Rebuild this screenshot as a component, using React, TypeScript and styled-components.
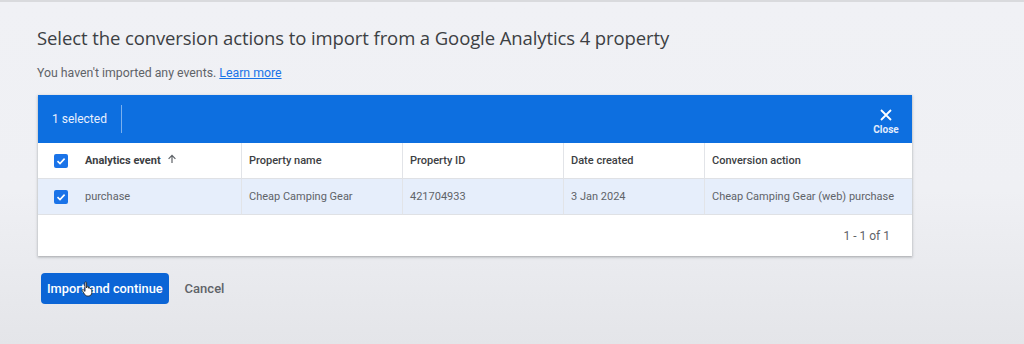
import React from 'react';
import styled, { createGlobalStyle } from 'styled-components';

const GlobalStyle = createGlobalStyle`
  html, body {
    margin: 0;
    padding: 0;
  }
  body {
    background: #eff0f4;
    font-family: Roboto, "Liberation Sans", Arial, sans-serif;
  }
`;

const Page = styled.div`
  width: 1024px;
  height: 344px;
  box-sizing: border-box;
  border-top: 2px solid #d9dadd;
  background: linear-gradient(180deg, #f0f1f5 0%, #eff0f4 55%, #e4e5e9 100%);
  padding: 22px 0 0 37px;
  overflow: hidden;
`;

const Title = styled.h1`
  margin: 0;
  font-family: "Open Sans", Roboto, sans-serif;
  font-size: 18.5px;
  font-weight: 400;
  line-height: 28px;
  color: #3c4043;
  letter-spacing: -0.1px;
`;

const Subtitle = styled.p`
  margin: 13px 0 0;
  font-size: 12.3px;
  line-height: 16px;
  color: #5f6368;
`;

const Link = styled.a`
  color: #1a73e8;
  text-decoration: underline;
`;

const Card = styled.div`
  margin: 14px 0 0 1px;
  width: 874px;
  background: #fff;
  box-shadow: 0 1px 2px rgba(60, 64, 67, 0.3), 0 1px 3px 1px rgba(60, 64, 67, 0.1);
`;

const SelectionBar = styled.div`
  height: 48px;
  background: #0d6fe0;
  display: flex;
  align-items: center;
  padding-left: 14px;
  color: #fff;
`;

const SelectedCount = styled.span`
  font-size: 12px;
  color: #e8f0fe;
  padding-right: 14px;
`;

const BarDivider = styled.span`
  width: 1px;
  height: 28px;
  background: rgba(255, 255, 255, 0.45);
`;

const CloseButton = styled.button`
  margin-left: auto;
  width: 52px;
  background: none;
  border: none;
  display: flex;
  flex-direction: column;
  align-items: center;
  padding: 4px 0 0;
  font-family: Roboto, sans-serif;
  font-size: 10px;
  font-weight: 700;
  color: #e3ecfb;
  gap: 2px;
`;

const Grid = styled.div`
  display: grid;
  grid-template-columns: 203px 161px 161px 141px 1fr;
`;

const Cell = styled.div<{ $head?: boolean; $selected?: boolean; $first?: boolean }>`
  height: 35px;
  display: flex;
  align-items: center;
  gap: 17px;
  padding-left: ${({ $first }) => ($first ? '16px' : '7px')};
  font-size: 11px;
  color: ${({ $head }) => ($head ? '#3c4043' : '#5f6368')};
  font-weight: ${({ $head, $first }) => ($head && $first ? 700 : $head ? 500 : 400)};
  background: ${({ $selected }) => ($selected ? '#e6eefb' : '#fff')};
  border-left: ${({ $first }) => ($first ? 'none' : '1px solid #e2e4e8')};
  border-bottom: 1px solid #dfe1e5;
  white-space: nowrap;
`;

const Checkbox = styled.span`
  width: 14px;
  height: 14px;
  border-radius: 2px;
  background: #1a73e8;
  display: inline-flex;
  align-items: center;
  justify-content: center;
  flex-shrink: 0;
`;

const SortArrow = styled.span`
  display: inline-flex;
  margin-left: 6px;
`;

const Footer = styled.div`
  height: 41px;
  display: flex;
  align-items: center;
  justify-content: flex-end;
  padding-right: 22px;
  font-size: 12px;
  color: #5f6368;
`;

const Actions = styled.div`
  display: flex;
  align-items: center;
  gap: 16px;
  margin: 17px 0 0 4px;
`;

const PrimaryButton = styled.button`
  height: 31px;
  padding: 0 6px;
  border: none;
  border-radius: 4px;
  background: #0b65d6;
  color: #fff;
  font-family: Roboto, sans-serif;
  font-size: 12.8px;
  font-weight: 500;
  position: relative;
`;

const TextButton = styled.button`
  background: none;
  border: none;
  color: #5f6368;
  font-family: Roboto, sans-serif;
  font-size: 13px;
  font-weight: 500;
  padding: 0;
`;

const Cursor = styled.svg`
  position: absolute;
  left: 40px;
  top: 8px;
`;

const CheckIcon = () => (
  <svg width="10" height="10" viewBox="0 0 10 10">
    <path d="M1.5 5.2 L4 7.6 L8.6 2.6" stroke="#fff" strokeWidth="1.6" fill="none" />
  </svg>
);

const columns = ['Analytics event', 'Property name', 'Property ID', 'Date created', 'Conversion action'];
const row = ['purchase', 'Cheap Camping Gear', '421704933', '3 Jan 2024', 'Cheap Camping Gear (web) purchase'];

export default function App() {
  return (
    <>
      <GlobalStyle />
      <Page>
        <Title>Select the conversion actions to import from a Google Analytics 4 property</Title>
        <Subtitle>
          You haven't imported any events. <Link href="#">Learn more</Link>
        </Subtitle>
        <Card>
          <SelectionBar>
            <SelectedCount>1 selected</SelectedCount>
            <BarDivider />
            <CloseButton>
              <svg width="14" height="14" viewBox="0 0 14 14">
                <path d="M2 2 L12 12 M12 2 L2 12" stroke="#fff" strokeWidth="1.8" />
              </svg>
              Close
            </CloseButton>
          </SelectionBar>
          <Grid>
            {columns.map((c, i) => (
              <Cell key={c} $head $first={i === 0}>
                {i === 0 && (
                  <Checkbox>
                    <CheckIcon />
                  </Checkbox>
                )}
                <span>
                  {c}
                  {i === 0 && (
                    <SortArrow>
                      <svg width="10" height="10" viewBox="0 0 10 10">
                        <path d="M5 9 V1.5 M1.6 4.8 L5 1.4 L8.4 4.8" stroke="#5f6368" strokeWidth="1.2" fill="none" />
                      </svg>
                    </SortArrow>
                  )}
                </span>
              </Cell>
            ))}
            {row.map((c, i) => (
              <Cell key={c} $selected $first={i === 0}>
                {i === 0 && (
                  <Checkbox>
                    <CheckIcon />
                  </Checkbox>
                )}
                <span>{c}</span>
              </Cell>
            ))}
          </Grid>
          <Footer>1 - 1 of 1</Footer>
        </Card>
        <Actions>
          <PrimaryButton>
            Import and continue
            <Cursor width="14" height="16" viewBox="0 0 14 16">
              <path
                d="M4 1.5 C4 0.8 5.6 0.8 5.6 1.5 V7 L6 5.8 C6.2 5.2 7.6 5.2 7.6 6 V7.2 C7.8 6.6 9.2 6.6 9.2 7.4 V8 C9.4 7.5 10.8 7.6 10.8 8.4 V11.5 C10.8 13.5 9.6 15 7.6 15 H6.4 C5 15 4.2 14.2 3.4 13 L1.2 9.6 C0.8 8.8 1.8 8.2 2.4 8.8 L4 10.4 Z"
                fill="#fff"
                stroke="#222"
                strokeWidth="0.9"
              />
            </Cursor>
          </PrimaryButton>
          <TextButton>Cancel</TextButton>
        </Actions>
      </Page>
    </>
  );
}
